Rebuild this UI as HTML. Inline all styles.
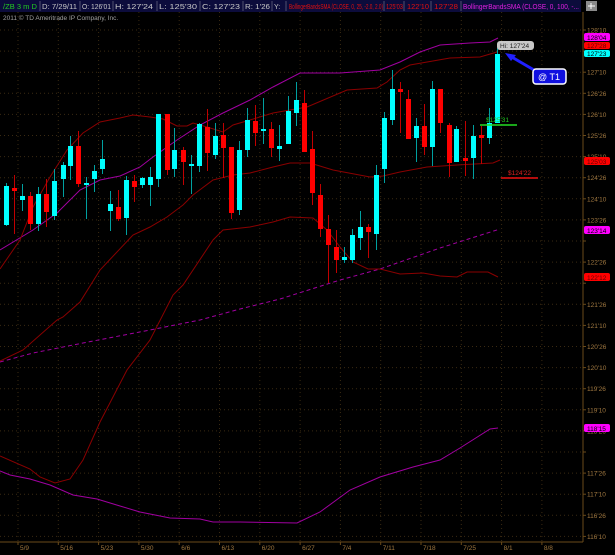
<!DOCTYPE html>
<html><head><meta charset="utf-8"><style>
html,body{margin:0;padding:0;background:#000;width:615px;height:555px;overflow:hidden}
svg{display:block;font-family:"Liberation Sans",sans-serif}
</style></head><body>
<svg id="s" width="615" height="555" viewBox="0 0 615 555" xmlns="http://www.w3.org/2000/svg">
<rect width="615" height="555" fill="#000"/>
<g id="grid"></g>
<!-- header -->
<rect x="0" y="0" width="581" height="12" fill="#0c0c3c"/>
<g font-size="7" fill="#c8c8c8" lengthAdjust="spacingAndGlyphs">
<text x="3" y="9" fill="#22cc22" textLength="34" lengthAdjust="spacingAndGlyphs">/ZB 3 m D</text>
<text x="42" y="9" textLength="35" lengthAdjust="spacingAndGlyphs">D: 7/29/11</text>
<text x="82" y="9" textLength="29" lengthAdjust="spacingAndGlyphs">O: 126'01</text>
<text x="115" y="9" textLength="38" lengthAdjust="spacingAndGlyphs">H: 127'24</text>
<text x="159" y="9" textLength="38" lengthAdjust="spacingAndGlyphs">L: 125'30</text>
<text x="202" y="9" textLength="38" lengthAdjust="spacingAndGlyphs">C: 127'23</text>
<text x="245" y="9" textLength="25" lengthAdjust="spacingAndGlyphs">R: 1'26</text>
<text x="274" y="9">Y:</text>
<text x="289" y="9" fill="#e01010" textLength="94" lengthAdjust="spacingAndGlyphs">BollingerBandsSMA (CLOSE, 0, 25, -2.0, 2.0)</text>
<text x="386" y="9" fill="#e01010" textLength="17" lengthAdjust="spacingAndGlyphs">125'03</text>
<text x="407" y="9" fill="#e01010" textLength="22" lengthAdjust="spacingAndGlyphs">122'10</text>
<text x="434" y="9" fill="#e01010" textLength="24" lengthAdjust="spacingAndGlyphs">127'28</text>
<text x="463" y="9" fill="#e020e0" textLength="116" lengthAdjust="spacingAndGlyphs">BollingerBandsSMA (CLOSE, 0, 100, -...</text>
</g>
<g stroke="#505070" stroke-width="1">
<line x1="40" y1="1" x2="40" y2="11"/><line x1="80" y1="1" x2="80" y2="11"/><line x1="113" y1="1" x2="113" y2="11"/><line x1="157" y1="1" x2="157" y2="11"/><line x1="200" y1="1" x2="200" y2="11"/><line x1="243" y1="1" x2="243" y2="11"/><line x1="272" y1="1" x2="272" y2="11"/><line x1="286" y1="1" x2="286" y2="11"/><line x1="384" y1="1" x2="384" y2="11"/><line x1="404" y1="1" x2="404" y2="11"/><line x1="431" y1="1" x2="431" y2="11"/><line x1="461" y1="1" x2="461" y2="11"/>
</g>
<rect x="586" y="1" width="11" height="10" fill="#8a8a8a"/>
<path d="M588 6h7M591 3v6" stroke="#fff" stroke-width="1"/>
<text x="3" y="20" font-size="6.5" fill="#a0a0a0">2011 © TD Ameritrade IP Company, Inc.</text>
<!-- axes -->
<line x1="583" y1="12" x2="583" y2="542" stroke="#6a4a1a"/>
<line x1="0" y1="542" x2="583" y2="542" stroke="#6a4a1a"/>
<g id="ax" font-size="6.5" fill="#a07840"></g>
<!-- bands -->
<g fill="none" stroke-width="1">
<polyline stroke="#a000a0" points="0,250 33,230 57,213 80,190 100,180 120,176 140,167 153,157 177,140 200,125 223,113 250,100 273,87 300,73 340,73 380,70 400,62 420,52 440,45 470,43 490,42 498,38"/>
<polyline stroke="#a000a0" stroke-dasharray="4,3" points="0,362 33,353 83,343 150,330 200,320 240,309 280,299 340,280 380,269 440,248 500,229"/>
<polyline stroke="#a000a0" points="0,471 10,475 30,479 50,485 73,495 97,499 120,506 140,512 170,518 200,519 213,522 240,522 297,523 320,512 350,490 380,477 413,467 440,460 460,448 490,429 498,428"/>
<polyline stroke="#8a0000" points="0,269 20,240 33,207 50,177 67,150 83,133 100,122 120,118 133,115 150,117 163,119 177,126 187,126 193,123 207,127 223,132 233,125 250,120 273,113 307,107 347,90 377,88 387,82 400,70 410,65 450,58 480,57 497,52"/>
<polyline stroke="#8a0000" points="0,361 23,350 57,320 63,317 80,302 100,270 133,235 150,227 167,217 183,205 193,195 213,180 233,175 250,173 273,167 290,163 310,163 333,170 370,177 383,176 400,172 427,167 457,165 493,163 500,160"/>
<polyline stroke="#8a0000" points="0,456 30,469 40,477 55,483 70,479 83,460 100,422 127,370 150,340 173,295 183,285 213,240 223,230 250,227 273,222 290,217 313,218 327,230 340,247 353,262 368,269 380,269 400,274 423,273 440,276 457,277 467,272 488,272 498,277"/>
</g>
<g id="c"></g>
<!-- annotations -->
<line x1="480" y1="125" x2="517" y2="125" stroke="#22dd22" stroke-width="1.5"/>
<text x="486" y="122" font-size="6.5" fill="#22cc22">$125'31</text>
<line x1="501" y1="178" x2="538" y2="178" stroke="#ee1010" stroke-width="1.5"/>
<text x="508" y="175" font-size="6.5" fill="#dd2020">$124'22</text>
<rect x="497" y="41" width="37" height="9" rx="3" fill="#c8c8c8"/>
<text x="500" y="48" font-size="6.5" fill="#222">Hi: 127'24</text>
<path d="M534 70 L510 56" stroke="#2020ff" stroke-width="3"/>
<path d="M505 53 L516 55 L511 61 Z" fill="#2020ff"/>
<rect x="533" y="69" width="33" height="15" rx="3" fill="#1010e0" stroke="#fff" stroke-width="1.5"/>
<text x="538" y="80" font-size="9" fill="#fff">@ T1</text>
<!-- tags -->
<g font-size="6.5">
<rect x="584" y="33" width="26" height="8" rx="2" fill="#ff00ff"/><text x="587" y="40" fill="#000">128'04</text>
<rect x="584" y="42" width="26" height="7" rx="2" fill="#ff0000"/><text x="587" y="48" fill="#600">127'28</text>
<rect x="584" y="50" width="26" height="7" rx="2" fill="#00ffff"/><text x="587" y="56" fill="#000">127'23</text>
<rect x="584" y="157" width="26" height="8" rx="2" fill="#ff0000"/><text x="587" y="164" fill="#600">125'03</text>
<rect x="584" y="226" width="26" height="8" rx="2" fill="#ff00ff"/><text x="587" y="233" fill="#000">123'14</text>
<rect x="584" y="273" width="26" height="8" rx="2" fill="#ff0000"/><text x="587" y="280" fill="#600">122'12</text>
<rect x="584" y="424" width="26" height="8" rx="2" fill="#ff00ff"/><text x="587" y="431" fill="#000">118'15</text>
</g>
</svg>
<script>
var NS="http://www.w3.org/2000/svg";
function el(p,t,a,txt){var e=document.createElementNS(NS,t);for(var k in a)e.setAttribute(k,a[k]);if(txt)e.textContent=txt;document.getElementById(p).appendChild(e);}
var labs=["128'10","127'26","127'10","126'26","126'10","125'26","125'10","124'26","124'10","123'26","123'10","122'26","122'10","121'26","121'10","120'26","120'10","119'26","119'10","118'26","118'10","117'26","117'10","116'26","116'10"];
var hide={1:1,10:1,12:1,20:1};
for(var i=0;i<labs.length;i++){var y=30+i*21.1;
el("grid","line",{x1:0,x2:583,y1:y,y2:y,stroke:"#3a2a12","stroke-dasharray":"1,3"});
el("ax","line",{x1:583,x2:586,y1:y,y2:y,stroke:"#6a4a1a"});
if(!hide[i])el("ax","text",{x:587,y:y+2.5},labs[i]);}
var d=["5/9","5/16","5/23","5/30","6/6","6/13","6/20","6/27","7/4","7/11","7/18","7/25","8/1","8/8"];
for(var i=0;i<d.length;i++){var x=18+i*40.3;
el("grid","line",{x1:x,x2:x,y1:12,y2:542,stroke:"#3a2a12","stroke-dasharray":"1,3"});
el("ax","line",{x1:x,x2:x,y1:542,y2:545,stroke:"#6a4a1a"});
el("ax","text",{x:x+2,y:550},d[i]);}
var C=[[4,186,225,183,226,1],[12,188,191,175,234,0],[20,196,200,184,211,1],[28,196,224,192,230,0],[36,194,224,187,231,1],[44,194,212,179,227,0],[52,181,216,169,220,1],[61,165,179,162,197,1],[68,146,166,136,180,1],[76,146,184,131,187,0],[84,183,184,177,219,1],[92,171,179,165,192,1],[100,159,169,140,174,1],[108,204,211,191,231,1],[116,207,219,190,221,0],[124,180,218,176,235,1],[132,181,187,175,202,0],[140,178,185,177,188,1],[148,177,185,167,206,1],[156,114,179,114,187,1],[165,114,170,114,175,0],[172,150,169,128,177,1],[181,150,162,147,185,0],[189,164,166,155,194,1],[197,124,166,123,172,1],[205,127,153,109,171,0],[213,136,155,123,159,1],[221,135,148,123,178,0],[229,147,213,147,219,0],[237,150,210,141,215,1],[245,120,150,108,157,1],[253,121,133,105,146,0],[261,129,131,98,144,1],[269,129,148,122,157,0],[277,146,149,125,161,1],[286,111,144,96,144,1],[294,100,113,82,126,1],[302,103,152,90,152,0],[310,149,193,131,205,0],[318,195,229,184,237,0],[326,229,245,215,283,0],[334,247,260,230,273,0],[342,257,260,247,263,1],[350,235,260,229,263,1],[358,227,238,211,250,1],[366,227,232,224,258,0],[374,175,234,165,250,1],[382,118,169,112,183,1],[390,89,120,70,125,1],[398,89,92,82,133,0],[406,99,139,90,139,0],[414,126,138,118,162,1],[422,126,147,104,155,0],[430,89,147,81,166,1],[438,89,123,89,133,0],[447,125,163,123,177,0],[454,129,162,126,162,1],[463,158,161,121,176,0],[471,136,158,125,179,1],[479,135,138,126,164,0],[487,123,138,108,144,1],[495,54,123,48,123,1]];
C.forEach(function(c){var col=c[5]?"#00ffff":"#ff0000",wc=c[5]?"#00a0a0":"#c00000";
el("c","line",{x1:c[0]+2.5,x2:c[0]+2.5,y1:c[3],y2:c[4],stroke:wc,"stroke-width":1});
el("c","rect",{x:c[0],y:c[1],width:5,height:Math.max(2,c[2]-c[1]),fill:col});});
</script>
</body></html>
